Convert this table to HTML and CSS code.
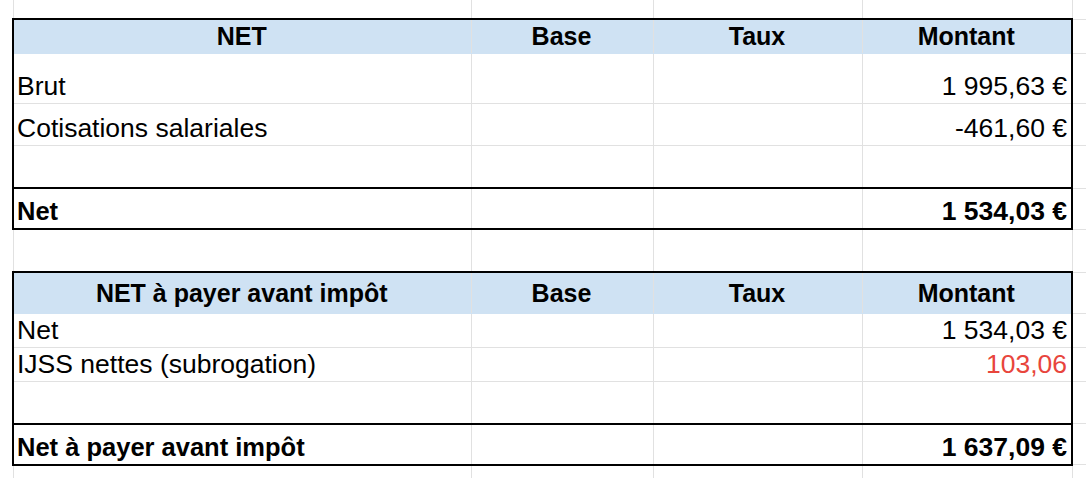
FILE: index.html
```html
<!DOCTYPE html>
<html lang="fr">
<head>
<meta charset="utf-8">
<title>Net</title>
<link rel="stylesheet" href="styles.css">
</head>
<body>
<table class="sheet">
  <colgroup>
    <col class="c-gut"><col class="c-lbl"><col class="c-base"><col class="c-taux"><col class="c-amt"><col class="c-trail">
  </colgroup>
  <tbody>
    <tr class="r-lead">
      <td class="gut"></td><td></td><td></td><td></td><td></td><td class="trail"></td>
    </tr>
    <tr class="r-head top">
      <td class="gut"></td>
      <td class="d l hd">NET</td>
      <td class="d hd">Base</td>
      <td class="d hd">Taux</td>
      <td class="d r hd">Montant</td>
      <td class="trail"></td>
    </tr>
    <tr class="r-tall">
      <td class="gut"></td>
      <td class="d l">Brut</td><td class="d"></td><td class="d"></td>
      <td class="d r num">1&nbsp;995,63&nbsp;€</td>
      <td class="trail"></td>
    </tr>
    <tr class="r-std">
      <td class="gut"></td>
      <td class="d l">Cotisations salariales</td><td class="d"></td><td class="d"></td>
      <td class="d r num">-461,60&nbsp;€</td>
      <td class="trail"></td>
    </tr>
    <tr class="r-std">
      <td class="gut"></td>
      <td class="d l"></td><td class="d"></td><td class="d"></td><td class="d r"></td>
      <td class="trail"></td>
    </tr>
    <tr class="r-total top bot">
      <td class="gut"></td>
      <td class="d l b">Net</td><td class="d"></td><td class="d"></td>
      <td class="d r num b bn">1&nbsp;534,03&nbsp;€</td>
      <td class="trail"></td>
    </tr>
    <tr class="r-std">
      <td class="gut"></td><td></td><td></td><td></td><td></td><td class="trail"></td>
    </tr>
    <tr class="r-head2 top">
      <td class="gut"></td>
      <td class="d l hd mid">NET à payer avant impôt</td>
      <td class="d hd mid">Base</td>
      <td class="d hd mid">Taux</td>
      <td class="d r hd mid">Montant</td>
      <td class="trail"></td>
    </tr>
    <tr class="r-short">
      <td class="gut"></td>
      <td class="d l">Net</td><td class="d"></td><td class="d"></td>
      <td class="d r num">1&nbsp;534,03&nbsp;€</td>
      <td class="trail"></td>
    </tr>
    <tr class="r-short">
      <td class="gut"></td>
      <td class="d l">IJSS nettes (subrogation)</td><td class="d"></td><td class="d"></td>
      <td class="d r num red">103,06</td>
      <td class="trail"></td>
    </tr>
    <tr class="r-std">
      <td class="gut"></td>
      <td class="d l"></td><td class="d"></td><td class="d"></td><td class="d r"></td>
      <td class="trail"></td>
    </tr>
    <tr class="r-total top bot">
      <td class="gut"></td>
      <td class="d l b">Net à payer avant impôt</td><td class="d"></td><td class="d"></td>
      <td class="d r num b bn">1&nbsp;637,09&nbsp;€</td>
      <td class="trail"></td>
    </tr>
    <tr class="r-std">
      <td class="gut"></td><td></td><td></td><td></td><td></td><td class="trail"></td>
    </tr>
  </tbody>
</table>
</body>
</html>
```
FILE: styles.css
```css
html, body {
  margin: 0;
  padding: 0;
  background: #ffffff;
  overflow: hidden;
}

.sheet {
  border-collapse: collapse;
  table-layout: fixed;
  width: 1120px;
  font-family: "Liberation Sans", Arial, sans-serif;
  font-size: 26.5px;
  color: #000000;
}

.c-gut { width: 13px; }
.c-lbl { width: 458px; }
.c-base { width: 182px; }
.c-taux { width: 209px; }
.c-amt { width: 210px; }
.c-trail { width: 48px; }

.sheet td {
  border: 1px solid #e1e1e1;
  padding: 0 4px 5px 3px;
  line-height: 24px;
  vertical-align: bottom;
  white-space: nowrap;
  overflow: hidden;
}

.sheet td.gut {
  border: none;
  padding: 0 0 5px 0;
}

.sheet td.trail {
  border-right: none;
}

.r-lead td { border-top: none; height: 13px; }
.r-head td { height: 28px; }
.r-head2 td { height: 35px; }
.r-tall td { height: 44px; }
.r-std td { height: 36px; }
.r-total td { height: 34px; }
.r-short td { height: 28px; }

.sheet td.l { border-left: 2px solid #000000; }
.sheet td.r { border-right: 2px solid #000000; }
.top td.d { border-top: 2px solid #000000; }
.bot td.d { border-bottom: 2px solid #000000; }

.sheet td.hd {
  background: #cfe2f3;
  font-weight: bold;
  font-size: 25px;
  text-align: center;
  border-bottom: 1px solid #cfe2f3;
}

.sheet td.hd + td.hd {
  border-left: 1px solid #cfe2f3;
}

.sheet td.mid {
  vertical-align: middle;
  padding-bottom: 0;
}

.num { text-align: right; }

.b {
  font-weight: bold;
  font-size: 25.5px;
}

.sheet td.bn { font-size: 26.5px; }

.red { color: #e8453c; }
```
